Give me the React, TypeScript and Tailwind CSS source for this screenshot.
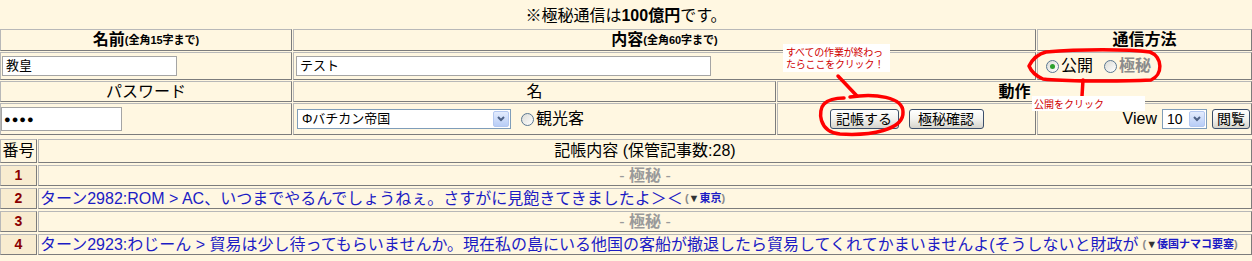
import { ReactNode } from "react";

const cell = "border border-t-[#b8b8b8] border-l-[#b8b8b8] border-b-[#7c7c7c] border-r-[#7c7c7c] bg-[#fff7e1]";

function Radio({ checked }: { checked?: boolean }) {
  return (
    <span className="inline-flex w-[13px] h-[13px] rounded-full border border-[#5a7792] bg-gradient-to-br from-[#dcdcd6] to-[#ffffff] items-center justify-center shrink-0">
      {checked && <span className="w-[5px] h-[5px] rounded-full bg-[#2ca02c]" />}
    </span>
  );
}

function XpButton({ children, w }: { children: ReactNode; w: string }) {
  return (
    <button
      className={`${w} h-[20px] rounded-[3px] border border-[#3c4f6b] bg-gradient-to-b from-[#ffffff] via-[#f2f2ee] to-[#d6d4cc] text-[14px] leading-none text-black`}
    >
      {children}
    </button>
  );
}

function DropArrow() {
  return (
    <span className="w-[16px] h-[16px] mr-[1px] flex items-center justify-center rounded-[2px] border border-[#b4c8f0] bg-gradient-to-b from-[#e4ecfd] to-[#b8cdf6]">
      <svg width="8" height="6" viewBox="0 0 8 6">
        <path d="M1 1 L4 4 L7 1" stroke="#4d6185" strokeWidth="2" fill="none" />
      </svg>
    </span>
  );
}

export default function App() {
  return (
    <div className="relative w-[1252px] h-[261px] overflow-hidden bg-[#fff7e1] text-black font-['Liberation_Sans','Noto_Sans_CJK_JP',sans-serif]">
      <div className="h-[29px] pt-[6px] text-center text-[16px] leading-[20px]">
        ※極秘通信は<b>100億円</b>です。
      </div>

      {/* form table */}
      <div className="grid grid-cols-[292px_483px_259px_215px] gap-x-[1px] gap-y-[1px]">
        <div className={`${cell} h-[22px] flex items-center justify-center font-bold text-[16px]`}>
          名前<span className="text-[11px]">(全角15字まで)</span>
        </div>
        <div className={`${cell} col-span-2 h-[22px] flex items-center justify-center font-bold text-[16px]`}>
          内容<span className="text-[11px]">(全角60字まで)</span>
        </div>
        <div className={`${cell} h-[22px] flex items-center justify-center font-bold text-[16px]`}>通信方法</div>

        <div className={`${cell} h-[28px] flex items-center pl-[1px]`}>
          <div className="w-[175px] h-[20px] bg-white border border-[#a5a5a5] text-[13px] leading-[18px] pl-[3px]">教皇</div>
        </div>
        <div className={`${cell} col-span-2 h-[28px] flex items-center pl-[2px]`}>
          <div className="w-[415px] h-[20px] bg-white border border-[#a5a5a5] text-[13px] leading-[18px] pl-[3px]">テスト</div>
        </div>
        <div className={`${cell} h-[28px] flex items-center pl-[8px] gap-[2px] text-[16px]`}>
          <Radio checked />
          <span className="mr-[9px]">公開</span>
          <Radio />
          <span className="font-bold text-[#8c8c8c]">極秘</span>
        </div>

        <div className={`${cell} h-[21px] flex items-center justify-center text-[16px]`}>パスワード</div>
        <div className={`${cell} h-[21px] flex items-center justify-center text-[16px]`}>名</div>
        <div className={`${cell} col-span-2 h-[21px] flex items-center justify-center text-[16px] font-bold`}>動作</div>

        <div className={`${cell} h-[32px] flex items-center`}>
          <div className="w-[121px] h-[24px] bg-white border border-[#a5a5a5] text-[11px] leading-[22px] pl-[2px] tracking-[1px]">●●●●</div>
        </div>
        <div className={`${cell} h-[32px] flex items-center pl-[3px] gap-[10px]`}>
          <div className="w-[214px] h-[20px] bg-white border border-[#7f9db9] flex items-center justify-between text-[13px] pl-[4px]">
            <span>Φバチカン帝国</span>
            <DropArrow />
          </div>
          <span className="flex items-center gap-[2px] text-[16px]">
            <Radio />
            観光客
          </span>
        </div>
        <div className={`${cell} h-[32px] flex items-center justify-center gap-[10px]`}>
          <XpButton w="w-[69px]">記帳する</XpButton>
          <XpButton w="w-[75px]">極秘確認</XpButton>
        </div>
        <div className={`${cell} h-[32px] flex items-center justify-end pr-[1px]`}>
          <span className="text-[16px] mr-[5px]">View</span>
          <div className="w-[45px] h-[20px] bg-white border border-[#7f9db9] flex items-center justify-between text-[14px] pl-[4px] mr-[5px]">
            <span>10</span>
            <DropArrow />
          </div>
          <XpButton w="w-[38px]">閲覧</XpButton>
        </div>
      </div>

      {/* log table */}
      <div className="grid grid-cols-[37px_1214px] gap-x-[1px] gap-y-[2px] mt-[4px]">
        <div className={`${cell} h-[24px] flex items-center justify-center text-[16px]`}>番号</div>
        <div className={`${cell} h-[24px] flex items-center justify-center text-[16px]`}>記帳内容 (保管記事数:28)</div>

        <div className={`${cell} !bg-[#f8ecd0] h-[21px] flex items-center justify-center font-bold text-[14px] text-[#8b0000]`}>1</div>
        <div className={`${cell} h-[21px] flex items-center justify-center text-[16px] text-[#9a9a9a]`}>
          -&nbsp;<b>極秘</b>&nbsp;-
        </div>

        <div className={`${cell} !bg-[#f8ecd0] h-[21px] flex items-center justify-center font-bold text-[14px] text-[#8b0000]`}>2</div>
        <div className={`${cell} h-[21px] flex items-center pl-[1px] text-[16px] text-[#1c1cc4] whitespace-nowrap overflow-hidden`}>
          ターン2982:ROM &gt; AC、いつまでやるんでしょうねぇ。さすがに見飽きてきましたよ＞＜
          <span className="text-[11px] font-bold ml-[2px]">
            <span className="text-[#8a8a8a]">(</span>
            <span className="text-[#333]">▼</span>
            <span className="text-[#1c1cc4]">東京</span>
            <span className="text-[#8a8a8a]">)</span>
          </span>
        </div>

        <div className={`${cell} !bg-[#f8ecd0] h-[21px] flex items-center justify-center font-bold text-[14px] text-[#8b0000]`}>3</div>
        <div className={`${cell} h-[21px] flex items-center justify-center text-[16px] text-[#9a9a9a]`}>
          -&nbsp;<b>極秘</b>&nbsp;-
        </div>

        <div className={`${cell} !bg-[#f8ecd0] h-[21px] flex items-center justify-center font-bold text-[14px] text-[#8b0000]`}>4</div>
        <div className={`${cell} h-[21px] flex items-center pl-[1px] text-[16px] text-[#1c1cc4] whitespace-nowrap overflow-hidden`}>
          ターン2923:わじーん &gt; 貿易は少し待ってもらいませんか。現在私の島にいる他国の客船が撤退したら貿易してくれてかまいませんよ(そうしないと財政が
          <span className="text-[11px] font-bold ml-[4px]">
            <span className="text-[#8a8a8a]">(</span>
            <span className="text-[#333]">▼</span>
            <span className="text-[#1c1cc4]">倭国ナマコ要塞</span>
            <span className="text-[#8a8a8a]">)</span>
          </span>
        </div>
      </div>

      {/* hand-drawn annotations */}
      <svg className="absolute left-0 top-0 pointer-events-none" width="1252" height="261" viewBox="0 0 1252 261">
        <g stroke="#ff0000" strokeWidth="3.5" fill="none" strokeLinecap="round" strokeLinejoin="round">
          <path d="M838 76 L857 96" />
          <path d="M850 97 C875 93 903 97 903 112 C904 130 870 136 840 134 C818 132 818 110 824 104 C828 100 836 98 844 98" />
          <path d="M1046 52 C1080 49 1128 49 1150 52 C1163 57 1163 75 1151 80 C1112 82 1062 81 1043 79 C1036 76 1031 71 1029 66 C1032 60 1038 54 1046 52 Z" />
          <path d="M1083 80 L1082 96" />
        </g>
      </svg>
      <div className="absolute left-[783px] top-[44px] w-[107px] h-[28px] bg-white pl-[3px] pt-[2px] flex flex-col whitespace-nowrap text-[10px] tracking-[-0.2px] text-[#d00000] font-['Noto_Sans_CJK_JP',sans-serif]">
        <span className="leading-[12px] h-[12px]">すべての作業が終わっ</span>
        <span className="leading-[12px] h-[12px]">たらここをクリック！</span>
      </div>
      <div className="absolute left-[1032px] top-[96px] w-[113px] h-[15px] bg-white pl-[2px] whitespace-nowrap text-[10px] leading-[15px] text-[#d00000] font-['Noto_Sans_CJK_JP',sans-serif]">
        公開をクリック
      </div>
    </div>
  );
}
